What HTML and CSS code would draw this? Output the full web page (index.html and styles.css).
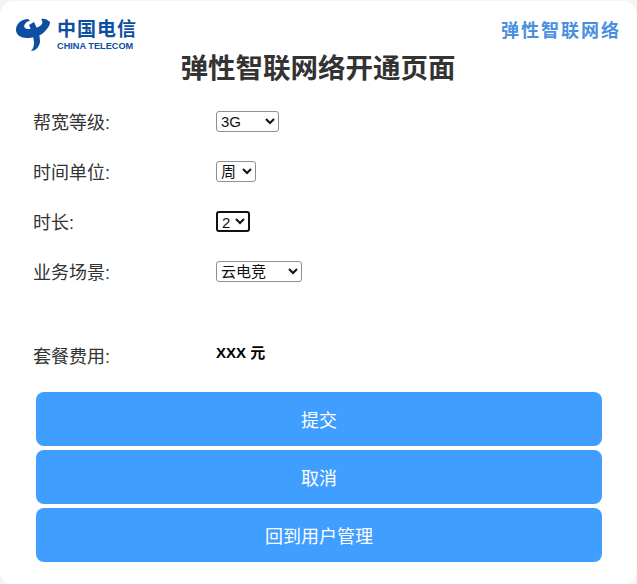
FILE: index.html
```html
<!DOCTYPE html>
<html lang="zh-CN">
<head>
<meta charset="UTF-8" />
<meta name="viewport" content="width=device-width, initial-scale=1.0" />
<title>弹性智联网络开通页面</title>
<link rel="stylesheet" href="styles.css">
</head>
<body>
<div class="card">
  <div class="header">
    <div class="logo">
      <svg class="logo-mark" viewBox="0 0 34 33" width="34" height="33">
        <path d="M12 1C5 1 0 6 0 12C0 17 5 20 11 20C17 20 26 18 30 12C33 9 34 6 34 4C31 1 28 0 25 1C27 3 27 6 24 8C21 10 17 11 13 11C9 11 7 9 9 6C10 4 12 3 14 3Z" fill="#0b4ea2"/>
        <path d="M13 7C16 14 18 21 18 25C18 28 17 31 15 33C20 33 24 28 24 23C24 17 21 10 18 4Z" fill="#0b4ea2"/>
      </svg>
      <div class="logo-text">
        <span class="logo-cn">中国电信</span>
        <span class="logo-en">CHINA TELECOM</span>
      </div>
    </div>
    <div class="brand">弹性智联网络</div>
  </div>

  <h1>弹性智联网络开通页面</h1>

  <div class="form">
    <div class="row">
      <label>帮宽等级:</label>
      <select class="sel-bandwidth"><option>3G</option><option>10G</option></select>
    </div>
    <div class="row">
      <label>时间单位:</label>
      <select><option>周</option><option>月</option></select>
    </div>
    <div class="row">
      <label>时长:</label>
      <select class="focused"><option>2</option><option>3</option></select>
    </div>
    <div class="row">
      <label>业务场景:</label>
      <select class="sel-scene"><option>云电竞</option><option>云游戏</option></select>
    </div>
    <div class="row row-cost">
      <label>套餐费用:</label>
      <span class="price">XXX 元</span>
    </div>
  </div>

  <div class="actions">
    <button>提交</button>
    <button>取消</button>
    <button>回到用户管理</button>
  </div>
</div>
</body>
</html>
```

FILE: styles.css
```css
:root {
  --accent-blue: #409eff;
  --font-body: "Liberation Sans", "Noto Sans CJK SC", sans-serif;
}

html, body { height: 100%; }

body {
  margin: 0;
  background: #f4f4f4;
  font-family: var(--font-body);
  color: #333;
  overflow: hidden;
}

.card {
  background: #fff;
  height: 584px;
  box-sizing: border-box;
  margin-top: 1px;
  border-radius: 14px;
  padding: 17px 17px 0 16px;
}

.header {
  display: flex;
  justify-content: space-between;
  align-items: flex-start;
}

.logo { display: flex; align-items: center; gap: 7px; }
.logo-mark { display: block; }
.logo-text { display: flex; flex-direction: column; color: #0b4ea2; }
.logo-cn { font-size: 19px; line-height: 24px; font-weight: 700; letter-spacing: 1px; }
.logo-en { font-size: 9.2px; line-height: 9px; font-weight: 700; white-space: nowrap; }

.brand {
  font-size: 18px;
  font-weight: 700;
  line-height: 26px;
  letter-spacing: 2px;
  margin-right: -1px;
  color: #4a8fe0;
}

h1 {
  margin: -1px 0 0;
  text-align: center;
  font-size: 27.5px;
  line-height: 38px;
  font-weight: 700;
  color: #333;
}

.form { margin-top: 8px; padding-left: 17px; }

.row {
  display: grid;
  grid-template-columns: 183px auto;
  justify-content: start;
  align-items: center;
  height: 50px;
  font-size: 18px;
}

.row label { color: #333; }

select {
  font-family: var(--font-body);
  font-size: 15px;
  height: 21px;
  padding: 0;
  width: 40px;
  background: #fff;
  color: #111;
  border: 1px solid #8f8f8f;
  border-radius: 3px;
}

.sel-bandwidth { width: 63px; }
.sel-scene { width: 86px; }
.focused { width: 34px; border: 2px solid #111; }

.row-cost { margin-top: 34px; }
.price { font-size: 15px; font-weight: 700; color: #000; margin-top: -8px; }

.actions {
  display: flex;
  flex-direction: column;
  gap: 4px;
  margin: 12px 18px 0 20px;
}

button {
  height: 54px;
  background: var(--accent-blue);
  color: #fff;
  border: none;
  border-radius: 8px;
  font-family: var(--font-body);
  font-size: 18px;
  cursor: pointer;
}
```
